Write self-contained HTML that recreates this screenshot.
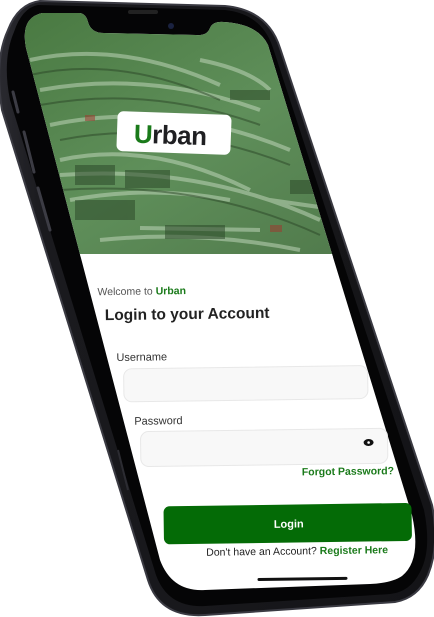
<!DOCTYPE html>
<html><head><style>
html,body{margin:0;padding:0;background:#fff;width:434px;height:617px;overflow:hidden}
svg{display:block}
text{font-family:"Liberation Sans",sans-serif}
</style></head><body>
<svg width="434" height="617" viewBox="0 0 434 617" xmlns="http://www.w3.org/2000/svg">
<defs>
<clipPath id="scr"><path d="M42,13 L80,13 Q86,14 88,22 Q91,33 104,33 L196,35 Q207,36 210,28 Q213,21 224,22 Q258,24 268,45 L412,515 Q422,560 402,576 Q392,583 370,584 L205,590 Q172,592 160,560 L26,48 Q20,18 42,13 Z"/></clipPath>
<linearGradient id="bg" x1="0" y1="0" x2="1" y2="1">
<stop offset="0" stop-color="#47773f"/><stop offset="0.5" stop-color="#5f8f5a"/><stop offset="1" stop-color="#4d7548"/>
</linearGradient>
<linearGradient id="body" x1="0" y1="0" x2="1" y2="0">
<stop offset="0" stop-color="#2a2a30"/><stop offset="0.1" stop-color="#1a1a1e"/><stop offset="1" stop-color="#141417"/>
</linearGradient>
</defs>
<path d="M40,1 L225,6 Q268,10 280,48 L432,505 Q440,545 428,575 Q418,598 395,602 L205,615 Q160,618 148,580 L2,110 Q-6,60 8,30 Q18,4 40,1 Z" fill="url(#body)"/>
<path d="M40,1 L225,6 Q268,10 280,48 L432,505 Q440,545 428,575 Q418,598 395,602 L205,615 Q160,618 148,580 L2,110 Q-6,60 8,30 Q18,4 40,1 Z" fill="none" stroke="#3a3a42" stroke-width="2"/>
<path d="M38,5 L225,10 Q262,14 273,48 L424,510 Q432,550 420,572 Q410,592 390,594 L205,606 Q168,608 156,575 L10,100 Q2,60 14,32 Q22,8 38,5 Z" fill="#050506"/>
<g clip-path="url(#scr)">
<rect x="0" y="0" width="434" height="617" fill="#fff"/>
<rect x="0" y="0" width="434" height="256" fill="url(#bg)"/>
<g stroke="#c7dcc2" stroke-width="4" opacity="0.5" fill="none">
<path d="M30,60 Q120,40 220,85"/><path d="M40,90 Q150,70 260,110"/><path d="M50,125 Q170,100 290,150"/><path d="M60,160 Q150,140 250,190"/><path d="M60,175 Q200,165 320,220"/><path d="M140,228 L260,230"/><path d="M270,200 L340,210"/><path d="M70,200 Q150,185 230,200"/><path d="M100,240 Q200,230 300,250"/><path d="M200,60 Q250,70 270,90"/></g>
<g stroke="#2a4526" stroke-width="2" opacity="0.5" fill="none">
<path d="M30,75 Q120,55 220,100"/><path d="M40,105 Q150,85 260,125"/><path d="M60,140 Q170,118 290,165"/><path d="M60,190 Q200,180 320,235"/></g>
<g fill="#2d4a2a" opacity="0.55"><rect x="75" y="165" width="40" height="20"/><rect x="125" y="170" width="45" height="18"/><rect x="75" y="200" width="60" height="20"/><rect x="165" y="225" width="60" height="14"/><rect x="230" y="90" width="40" height="10"/><rect x="290" y="180" width="30" height="14"/></g>
<g fill="#9c3a30" opacity="0.55"><rect x="85" y="115" width="10" height="6"/><rect x="270" y="225" width="12" height="7"/></g>
<rect x="0" y="254" width="434" height="3" fill="#fff"/>
</g>
<rect x="128" y="10" width="30" height="4" rx="2" fill="#222"/>
<circle cx="171" cy="26" r="3" fill="#1a2240"/>
<g transform="rotate(2 174 133)"><rect x="117" y="113" width="114" height="40" rx="6" fill="#fff"/></g>
<text x="134" y="144" font-size="26" font-weight="bold" fill="#1f1f22" letter-spacing="-0.5" transform="rotate(2 174 133)"><tspan fill="#1a7a1a">U</tspan>rban</text>
<g transform="rotate(-0.8 260 400)">
<text x="99" y="293" font-size="10.5" fill="#555">Welcome to <tspan fill="#1a7a1a" font-weight="bold">Urban</tspan></text>
<text x="106" y="318" font-size="15.5" font-weight="bold" fill="#222">Login to your Account</text>
<text x="117" y="359" font-size="11" fill="#333">Username</text>
<rect x="124" y="367" width="244" height="33" rx="8" fill="#f8f8f8" stroke="#e8e8e8"/>
<text x="134" y="423" font-size="11" fill="#333">Password</text>
<rect x="140" y="430" width="247" height="35" rx="8" fill="#f8f8f8" stroke="#e8e8e8"/>
<ellipse cx="368" cy="444" rx="5" ry="3.5" fill="#111"/><circle cx="368" cy="444" r="1.3" fill="#fff"/>
<text x="393" y="476" font-size="10.5" font-weight="bold" fill="#1a7a1a" text-anchor="end">Forgot Password?</text>
<rect x="162" y="505" width="248" height="38" rx="6" fill="#046b06"/>
<text x="287" y="528" font-size="11" font-weight="bold" fill="#fff" text-anchor="middle">Login</text>
<text x="295" y="555" font-size="10.5" fill="#222" text-anchor="middle">Don't have an Account? <tspan fill="#1a7a1a" font-weight="bold">Register Here</tspan></text>
<rect x="255" y="578" width="90" height="3" rx="1.5" fill="#111"/>
</g>
<g stroke="#3c3c44" stroke-width="3" stroke-linecap="round">
<line x1="13" y1="92" x2="18" y2="112"/>
<line x1="24" y1="132" x2="34" y2="172"/>
<line x1="38" y1="188" x2="50" y2="230"/>
</g>
<line x1="118" y1="450" x2="128" y2="490" stroke="#2c2c32" stroke-width="2"/>
</svg>
</body></html>
